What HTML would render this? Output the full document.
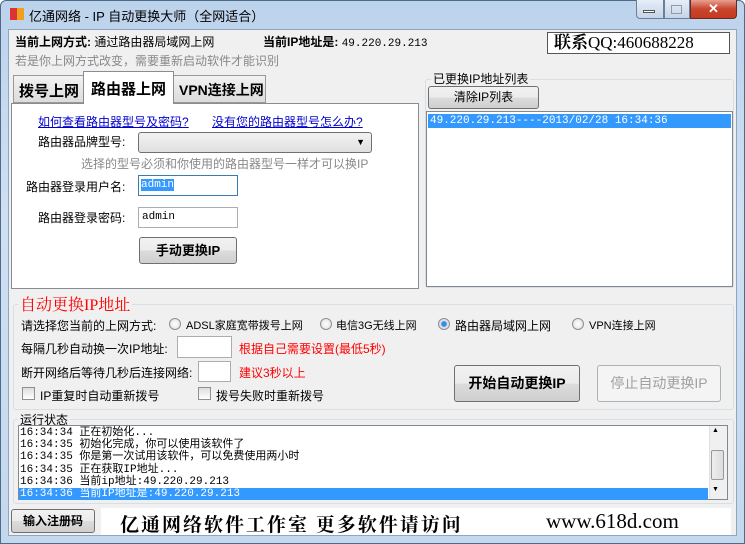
<!DOCTYPE html>
<html><head><meta charset="utf-8"><style>
*{margin:0;padding:0;box-sizing:border-box}
body{width:745px;height:544px;overflow:hidden;background:#fff;font-family:"Liberation Sans","Noto Sans CJK SC",sans-serif;font-size:12px;color:#000;position:relative}
.a{position:absolute;white-space:nowrap}
.frame{left:0;top:0;width:745px;height:544px;background:linear-gradient(#bcd3ec,#cfe0f3 40%,#c4d8ee);border:1px solid #4f6a8a;border-radius:6px 6px 0 0}
.client{left:8px;top:29px;width:729px;height:507px;background:#f0f0f0;border:1px solid #8fa6c0}
.btn{position:absolute;border:1px solid #707070;border-radius:3px;background:linear-gradient(#f2f2f2,#ebebeb 50%,#dcdcdc 51%,#cfcfcf);text-align:center}
.tb{background:#fff;border:1px solid #abadb3;position:absolute}
.grp{position:absolute;border:1px solid #d5dfe5;border-radius:3px}
.radio{position:absolute;width:12px;height:12px;border-radius:50%;border:1px solid #8f8f8f;background:radial-gradient(#fff,#ddd)}
.chk{position:absolute;width:13px;height:13px;border:1px solid #8f8f8f;background:linear-gradient(#ddd,#fff)}
.red{color:#f00}
.b{font-weight:bold}
</style></head><body>
<div class="a frame"></div>
<div class="a" style="left:10px;top:8px;width:14px;height:12px;background:linear-gradient(90deg,#d33 50%,#f0a020 50%)"></div>
<div class="a" style="left:29px;top:6px;font-size:13px">亿通网络 - IP 自动更换大师（全网适合）</div>
<div class="a" style="left:636px;top:0;width:28px;height:19px;border:1px solid #6a7f99;border-top:0;border-radius:0 0 0 4px;background:linear-gradient(#e6eef8,#c4d4e8)"></div>
<div class="a" style="left:643px;top:10px;width:12px;height:3px;background:#fff;border:1px solid #555"></div>
<div class="a" style="left:664px;top:0;width:26px;height:19px;border:1px solid #6a7f99;border-top:0;background:linear-gradient(#e6eef8,#c4d4e8)"></div>
<div class="a" style="left:671px;top:5px;width:11px;height:9px;border:1px solid #999"></div>
<div class="a" style="left:690px;top:0;width:47px;height:19px;border:1px solid #6a2a22;border-top:0;border-radius:0 0 4px 0;background:linear-gradient(#e8a090,#c8452e 50%,#c43a20);color:#fff;text-align:center;font-weight:bold;font-size:13px;line-height:17px">✕</div>
<div class="a client"></div>

<div class="a" style="left:15px;top:33px"><span class="b">当前上网方式:</span> 通过路由器局域网上网</div>
<div class="a" style="left:263px;top:33px"><span class="b">当前IP地址是:</span> <span style="font-family:'Liberation Mono',monospace;font-size:11px">49.220.29.213</span></div>
<div class="a" style="left:547px;top:32px;width:183px;height:22px;background:#fff;border:1px solid #555;font-family:'Liberation Serif','Noto Serif CJK SC',serif;font-size:17px;line-height:20px;padding-left:6px"><b>联系</b>QQ:460688228</div>
<div class="a" style="left:15px;top:52px;color:#888">若是你上网方式改变，需要重新启动软件才能识别</div>

<div class="a" style="left:13px;top:75px;width:71px;height:28px;border:1px solid #999;background:linear-gradient(#f2f2f2,#dcdcdc);font-size:15px;font-weight:bold;padding:4px 0 0 5px">拨号上网</div>
<div class="a" style="left:173px;top:75px;width:93px;height:28px;border:1px solid #999;background:linear-gradient(#f2f2f2,#dcdcdc);font-size:14px;font-weight:bold;padding:4px 0 0 5px">VPN连接上网</div>
<div class="a" style="left:11px;top:103px;width:408px;height:186px;background:#fff;border:1px solid #898c95"></div>
<div class="a" style="left:83px;top:71px;width:91px;height:33px;background:#fff;border:1px solid #898c95;border-bottom:0;font-size:15px;font-weight:bold;padding:6px 0 0 7px">路由器上网</div>
<div class="a" style="left:38px;top:113px;color:#00c;text-decoration:underline">如何查看路由器型号及密码?</div>
<div class="a" style="left:212px;top:113px;color:#00c;text-decoration:underline">没有您的路由器型号怎么办?</div>
<div class="a" style="left:38px;top:133px">路由器品牌型号:</div>
<div class="a" style="left:138px;top:132px;width:234px;height:21px;border:1px solid #707070;border-radius:3px;background:linear-gradient(#f2f2f2,#e0e0e0)"><span style="position:absolute;right:6px;top:4px;font-size:9px">▼</span></div>
<div class="a" style="left:81px;top:155px;color:#888">选择的型号必须和你使用的路由器型号一样才可以换IP</div>
<div class="a" style="left:26px;top:178px">路由器登录用户名:</div>
<div class="tb" style="left:138px;top:175px;width:100px;height:21px;border-color:#3d7bad"><span style="position:absolute;left:2px;top:3px;background:#3399ff;color:#fff;font-family:'Liberation Mono',monospace;font-size:11px">admin</span></div>
<div class="a" style="left:38px;top:209px">路由器登录密码:</div>
<div class="tb" style="left:138px;top:207px;width:100px;height:21px"><span style="position:absolute;left:3px;top:3px;font-family:'Liberation Mono',monospace;font-size:11px">admin</span></div>
<div class="btn b" style="left:139px;top:237px;width:98px;height:27px;line-height:25px;font-size:13px">手动更换IP</div>

<div class="grp" style="left:425px;top:79px;width:309px;height:209px"></div>
<div class="a" style="left:431px;top:70px;background:#f0f0f0;padding:0 2px">已更换IP地址列表</div>
<div class="btn" style="left:428px;top:86px;width:111px;height:23px;line-height:21px">清除IP列表</div>
<div class="tb" style="left:426px;top:111px;width:307px;height:176px;border-color:#828790"></div>
<div class="a" style="left:428px;top:114px;width:303px;height:14px;background:#3399ff;color:#fff;font-family:'Liberation Mono',monospace;font-size:11px;line-height:14px;padding-left:2px">49.220.29.213----2013/02/28 16:34:36</div>

<div class="grp" style="left:13px;top:304px;width:721px;height:106px"></div>
<div class="a red" style="left:18px;top:292px;font-size:16px;background:#f0f0f0;padding:0 2px;font-family:'Liberation Serif','Noto Serif CJK SC',serif">自动更换IP地址</div>
<div class="a" style="left:21px;top:317px">请选择您当前的上网方式:</div>
<div class="radio" style="left:169px;top:318px"></div><div class="a" style="left:186px;top:317px;font-size:11px">ADSL家庭宽带拨号上网</div>
<div class="radio" style="left:320px;top:318px"></div><div class="a" style="left:336px;top:317px;font-size:11px">电信3G无线上网</div>
<div class="radio" style="left:438px;top:318px;background:radial-gradient(#3a8ee0 35%,#dde 45%)"></div><div class="a" style="left:455px;top:317px">路由器局域网上网</div>
<div class="radio" style="left:572px;top:318px"></div><div class="a" style="left:589px;top:317px;font-size:11px">VPN连接上网</div>
<div class="a" style="left:21px;top:340px">每隔几秒自动换一次IP地址:</div>
<div class="tb" style="left:177px;top:336px;width:55px;height:22px"></div>
<div class="a red" style="left:239px;top:340px">根据自己需要设置(最低5秒)</div>
<div class="a" style="left:21px;top:364px">断开网络后等待几秒后连接网络:</div>
<div class="tb" style="left:198px;top:361px;width:33px;height:21px"></div>
<div class="a red" style="left:239px;top:364px">建议3秒以上</div>
<div class="chk" style="left:22px;top:387px"></div><div class="a" style="left:40px;top:387px">IP重复时自动重新拨号</div>
<div class="chk" style="left:198px;top:387px"></div><div class="a" style="left:216px;top:387px">拨号失败时重新拨号</div>
<div class="btn b" style="left:454px;top:365px;width:126px;height:37px;line-height:35px;font-size:14px">开始自动更换IP</div>
<div class="a" style="left:597px;top:365px;width:124px;height:37px;border:1px solid #adb2b5;border-radius:3px;background:#f4f4f4;color:#a0a0a0;text-align:center;line-height:35px;font-size:14px">停止自动更换IP</div>

<div class="grp" style="left:13px;top:419px;width:721px;height:85px"></div>
<div class="a" style="left:18px;top:411px;background:#f0f0f0;padding:0 2px">运行状态</div>
<div class="tb" style="left:18px;top:425px;width:710px;height:75px;border-color:#828790"></div>
<div class="a" style="left:709px;top:426px;width:18px;height:73px;background:#f0f0f0;border-left:1px solid #e0e0e0"></div>
<div class="a" style="left:712px;top:427px;font-size:7px">▲</div>
<div class="a" style="left:711px;top:450px;width:13px;height:30px;border:1px solid #999;border-radius:2px;background:linear-gradient(90deg,#eee,#ddd)"></div>
<div class="a" style="left:712px;top:486px;font-size:7px">▼</div>
<div class="a" style="left:20px;top:427px;font-size:11px;line-height:12.2px;font-family:'Liberation Mono','Noto Sans CJK SC',monospace">
16:34:34 正在初始化...<br>16:34:35 初始化完成，你可以使用该软件了<br>16:34:35 你是第一次试用该软件，可以免费使用两小时<br>16:34:35 正在获取IP地址...<br>16:34:36 当前ip地址:49.220.29.213</div>
<div class="a" style="left:19px;top:488px;width:689px;height:12px;background:#3399ff;color:#fff;font-size:11px;line-height:12px;padding-left:1px;font-family:'Liberation Mono','Noto Sans CJK SC',monospace">16:34:36 当前IP地址是:49.220.29.213</div>

<div class="btn b" style="left:11px;top:509px;width:84px;height:24px;line-height:22px">输入注册码</div>
<div class="a" style="left:101px;top:508px;width:630px;height:27px;background:#fff"></div>
<div class="a b" style="left:120px;top:510px;font-size:19px;font-family:'Noto Serif CJK SC',serif;letter-spacing:2px">亿通网络软件工作室 更多软件请访问</div>
<div class="a" style="left:546px;top:509px;font-size:21px;font-family:'Liberation Serif',serif">www.618d.com</div>
</body></html>
